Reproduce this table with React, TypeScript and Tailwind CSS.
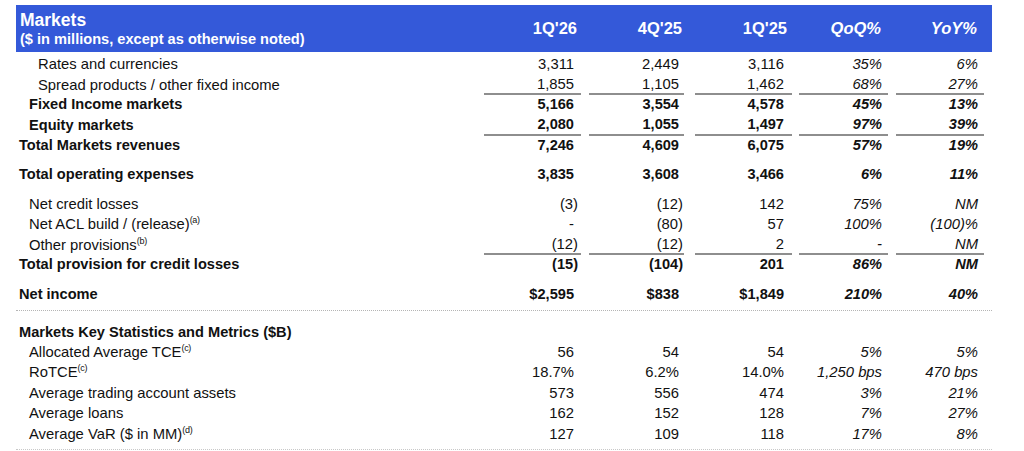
import React from 'react';

type Row = {
    label: string;
    sup?: string;
    indent: 0 | 1 | 2;
    bold?: boolean;
    values: string[];
    underline?: boolean;
};

// column boxes: width + left margin, written out in full for tailwind
const colBox = [
    'w-[97px] ml-0',
    'w-[95px] ml-[8px]',
    'w-[97px] ml-[11px]',
    'w-[89px] ml-[7px]',
    'w-[88px] ml-[8px]',
];

const indentCls = ['pl-[3px]', 'pl-[13px]', 'pl-[22px]'];

const headLabels = ["1Q'26", "4Q'25", "1Q'25", 'QoQ%', 'YoY%'];
const headPad = ['pr-[4px]', 'pr-[2px]', 'pr-[5px]', 'pr-[7px]', 'pr-[7px]'];

const revenueRows: Row[] = [
    { label: 'Rates and currencies', indent: 2, values: ['3,311', '2,449', '3,116', '35%', '6%'] },
    { label: 'Spread products / other fixed income', indent: 2, values: ['1,855', '1,105', '1,462', '68%', '27%'], underline: true },
    { label: 'Fixed Income markets', indent: 1, bold: true, values: ['5,166', '3,554', '4,578', '45%', '13%'] },
    { label: 'Equity markets', indent: 1, bold: true, values: ['2,080', '1,055', '1,497', '97%', '39%'], underline: true },
    { label: 'Total Markets revenues', indent: 0, bold: true, values: ['7,246', '4,609', '6,075', '57%', '19%'] },
];

const provisionRows: Row[] = [
    { label: 'Net credit losses', indent: 1, values: ['(3)', '(12)', '142', '75%', 'NM'] },
    { label: 'Net ACL build / (release)', sup: '(a)', indent: 1, values: ['-', '(80)', '57', '100%', '(100)%'] },
    { label: 'Other provisions', sup: '(b)', indent: 1, values: ['(12)', '(12)', '2', '-', 'NM'], underline: true },
    { label: 'Total provision for credit losses', indent: 0, bold: true, values: ['(15)', '(104)', '201', '86%', 'NM'] },
];

const statRows: Row[] = [
    { label: 'Allocated Average TCE', sup: '(c)', indent: 1, values: ['56', '54', '54', '5%', '5%'] },
    { label: 'RoTCE', sup: '(c)', indent: 1, values: ['18.7%', '6.2%', '14.0%', '1,250 bps', '470 bps'] },
    { label: 'Average trading account assets', indent: 1, values: ['573', '556', '474', '3%', '21%'] },
    { label: 'Average loans', indent: 1, values: ['162', '152', '128', '7%', '27%'] },
    { label: 'Average VaR ($ in MM)', sup: '(d)', indent: 1, values: ['127', '109', '118', '17%', '8%'] },
];

const cellPad = (i: number, v: string) => {
    if (i >= 3) return 'pr-[6px] italic';
    // accounting style: closing parenthesis hangs past the digits
    if (v.endsWith(')')) return i === 1 ? 'pr-[1px]' : 'pr-[3px]';
    return i === 1 ? 'pr-[5px]' : i === 2 ? 'pr-[8px]' : 'pr-[7px]';
};

const DataRow: React.FC<{ row: Row }> = ({ row }) => (
    <div className={`flex h-[20.5px] items-center ${row.bold ? 'font-bold text-[14.6px]' : 'text-[14.8px]'}`}>
        <div className={`w-[468px] ${indentCls[row.indent]}`}>
            {row.label}
            {row.sup && <sup className="text-[9px] font-normal relative -top-[6px] tracking-[-0.3px]">{row.sup}</sup>}
        </div>
        {row.values.map((v, i) => (
            <div
                key={i}
                className={`${colBox[i]} h-full flex items-center justify-end ${cellPad(i, v)} ${row.underline ? 'border-b-2 border-[#8e8e8e]' : ''}`}
            >
                {v}
            </div>
        ))}
    </div>
);

const SingleRow: React.FC<{ row: Row; className?: string }> = ({ row, className }) => (
    <div className={className}>
        <DataRow row={row} />
    </div>
);

export default function App() {
    return (
        <div className="w-[1024px] h-[451px] bg-white overflow-hidden" style={{ fontFamily: '"Liberation Sans", Arial, sans-serif' }}>
            <div className="ml-[16px] w-[976px] pt-[5px] text-[#111111]">
                {/* Header */}
                <div className="flex h-[47px] bg-[#3459d9] text-white font-bold">
                    <div className="w-[468px] pl-[4px] pt-[4px] leading-tight">
                        <div className="text-[17.5px] leading-[22px]">Markets</div>
                        <div className="text-[14.6px] leading-[17px]">($ in millions, except as otherwise noted)</div>
                    </div>
                    {headLabels.map((h, i) => (
                        <div
                            key={h}
                            className={`${colBox[i]} flex items-center justify-end text-[16.5px] pb-[1px] ${headPad[i]} ${i >= 3 ? 'italic' : ''}`}
                        >
                            {h}
                        </div>
                    ))}
                </div>

                <div className="h-[2px]" />
                {revenueRows.map(r => (
                    <DataRow key={r.label} row={r} />
                ))}

                <SingleRow
                    className="mt-[8.5px]"
                    row={{ label: 'Total operating expenses', indent: 0, bold: true, values: ['3,835', '3,608', '3,466', '6%', '11%'] }}
                />

                <div className="mt-[8px]">
                    {provisionRows.map(r => (
                        <DataRow key={r.label} row={r} />
                    ))}
                </div>

                <SingleRow
                    className="mt-[9.5px]"
                    row={{ label: 'Net income', indent: 0, bold: true, values: ['$2,595', '$838', '$1,849', '210%', '40%'] }}
                />

                <div className="mt-[4px] border-t border-dotted border-[#b5b5b5]" />

                {/* Key statistics */}
                <div className="mt-[13px] h-[18px] flex items-center pl-[3px] font-bold text-[14.6px]">
                    Markets Key Statistics and Metrics ($B)
                </div>
                {statRows.map(r => (
                    <DataRow key={r.label} row={r} />
                ))}
                <div className="mt-[5px] border-t border-dotted border-[#c8c8c8]" />
            </div>
        </div>
    );
}
